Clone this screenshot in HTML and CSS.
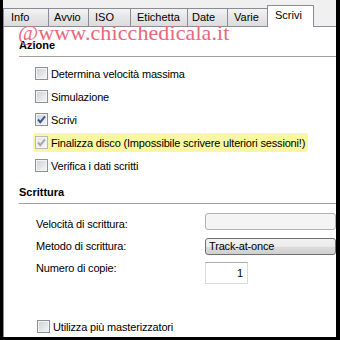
FILE: index.html
```html
<!DOCTYPE html>
<html lang="it">
<head>
  <meta charset="UTF-8">
  <title>Scrivi</title>
  <link rel="stylesheet" href="styles.css">
</head>
<body>
<div class="window">
  <div class="tabs">
    <div class="tab tab-info">Info</div>
    <div class="tab tab-avvio">Avvio</div>
    <div class="tab tab-iso">ISO</div>
    <div class="tab tab-etichetta">Etichetta</div>
    <div class="tab tab-date">Date</div>
    <div class="tab tab-varie">Varie</div>
    <div class="tab tab-scrivi active">Scrivi</div>
  </div>

  <div class="panel">
    <div class="watermark">@www.chicchedicala.it</div>

    <div class="section-title">Azione</div>
    <div class="checks">
      <div class="check"><span class="box"></span>Determina velocità massima</div>
      <div class="check"><span class="box"></span>Simulazione</div>
      <div class="check"><span class="box checked"><svg viewBox="0 0 13 13"><path d="M3 6.5 L5.3 9.2 L10 3.3"/></svg></span>Scrivi</div>
      <div class="check">
        <span class="highlight"><span class="box checked disabled"><svg viewBox="0 0 13 13"><path d="M3 6.5 L5.3 9.2 L10 3.3"/></svg></span>Finalizza disco (Impossibile scrivere ulteriori sessioni!)</span>
      </div>
      <div class="check"><span class="box"></span>Verifica i dati scritti</div>
    </div>

    <div class="section-title second">Scrittura</div>
    <div class="form">
      <div class="row row-speed">
        <span class="label">Velocità di scrittura:</span>
        <span class="combo combo-disabled"></span>
      </div>
      <div class="row row-method">
        <span class="label">Metodo di scrittura:</span>
        <span class="combo">Track-at-once</span>
      </div>
      <div class="row row-copies">
        <span class="label">Numero di copie:</span>
        <span class="spin">1</span>
      </div>
    </div>

    <div class="check check-last"><span class="box"></span>Utilizza più masterizzatori</div>
  </div>
</div>
</body>
</html>
```

FILE: styles.css
```css
body {
  margin: 0;
  background: #fff;
}

.window {
  width: 340px;
  height: 340px;
  box-sizing: border-box;
  border-left: 3px solid #000;
  border-right: 4px solid #000;
  border-bottom: 3px solid #000;
  background: #f0f0f0;
  overflow: hidden;
  font-family: "Liberation Sans", Arial, sans-serif;
  font-size: 11px;
  color: #000;
  display: flex;
  flex-direction: column;
}

/* tab strip */
.tabs {
  display: flex;
  align-items: flex-end;
  height: 26px;
  flex: none;
}

.tab {
  box-sizing: border-box;
  height: 18px;
  line-height: 17px;
  padding-left: 6px;
  border: 1px solid #898c95;
  border-bottom: none;
  margin-left: -1px;
  background: linear-gradient(#f3f3f3, #e6e6e6 50%, #dcdcdc);
  white-space: nowrap;
}

.tab-info { width: 46px; margin-left: 0; padding-left: 7px; }
.tab-avvio { width: 41px; padding-left: 5px; }
.tab-iso { width: 43px; }
.tab-etichetta { width: 58px; }
.tab-date { width: 41px; padding-left: 4px; }
.tab-varie { width: 41px; }

.tab.active {
  width: 47px;
  height: 22px;
  line-height: 19px;
  padding-left: 7px;
  background: #fff;
  margin-bottom: -1px;
  position: relative;
  z-index: 1;
}

/* panel */
.panel {
  flex: 1;
  position: relative;
  background: #fff;
  border-top: 1px solid #898c95;
  border-left: 1px solid #898c95;
  letter-spacing: -0.17px;
}

.watermark {
  position: absolute;
  left: 14px;
  top: 0;
  font-family: "Liberation Serif", "Times New Roman", serif;
  font-size: 22px;
  line-height: 11px;
  letter-spacing: 0.1px;
  color: #e8677c;
  pointer-events: none;
}

.section-title {
  margin-left: 15px;
  padding-top: 11px;
  padding-bottom: 4px;
  line-height: 14px;
  font-weight: bold;
  letter-spacing: 0;
  border-bottom: 1px solid #a0a0a0;
}

.section-title.second {
  margin-top: 8px;
  padding-top: 0;
}

.checks {
  margin-top: 5px;
}

.check {
  display: flex;
  align-items: center;
  height: 23px;
  padding-left: 31px;
  white-space: nowrap;
}

.highlight {
  display: inline-flex;
  align-items: center;
  margin-left: -2px;
  padding: 3px 3px 3px 2px;
  background: #fbf7a0;
  border-radius: 3px;
  color: #000;
}

.box {
  box-sizing: border-box;
  width: 13px;
  height: 13px;
  margin-right: 3px;
  border: 1px solid #8e8f8f;
  background: linear-gradient(135deg, #cbcfd5, #f7f8f9);
  box-shadow: inset 0 0 0 1px #f4f4f4;
  flex: none;
  position: relative;
}

.box svg {
  position: absolute;
  left: -1px;
  top: -1px;
  width: 13px;
  height: 13px;
}

.box svg path {
  fill: none;
  stroke: #3c5894;
  stroke-width: 2;
}

.box.disabled {
  border-color: #b8b8b8;
  background: linear-gradient(135deg, #e4e4e4, #f8f8f8);
}

.box.disabled svg path {
  stroke: #a8a8a8;
}

/* write options */
.form {
  margin-top: 7px;
  padding-left: 32px;
}

.row {
  display: flex;
  align-items: center;
}

.label {
  width: 169px;
  line-height: 14px;
  flex: none;
}

.row-speed { height: 23px; }
.row-speed .label { margin-top: 2px; }

.row-method { height: 24px; }

.row-copies {
  height: 26px;
  align-items: flex-start;
}
.row-copies .label { margin-top: 3px; }

.combo {
  box-sizing: border-box;
  width: 140px;
  height: 17px;
  line-height: 15px;
  padding-left: 3px;
  border: 1px solid #707070;
  border-radius: 3px;
  background: linear-gradient(#f2f2f2, #ebebeb 50%, #dddddd 50%, #cfcfcf);
}

.combo-disabled {
  margin-top: -2px;
  border-color: #adb2b5;
  background: #f4f4f4;
}

.spin {
  box-sizing: border-box;
  width: 43px;
  height: 22px;
  margin-top: 4px;
  line-height: 20px;
  padding-right: 4px;
  text-align: right;
  border: 1px solid #d5d9e0;
  border-top-color: #abadb3;
}

.check-last {
  margin-top: 31px;
  padding-left: 33px;
}
```
